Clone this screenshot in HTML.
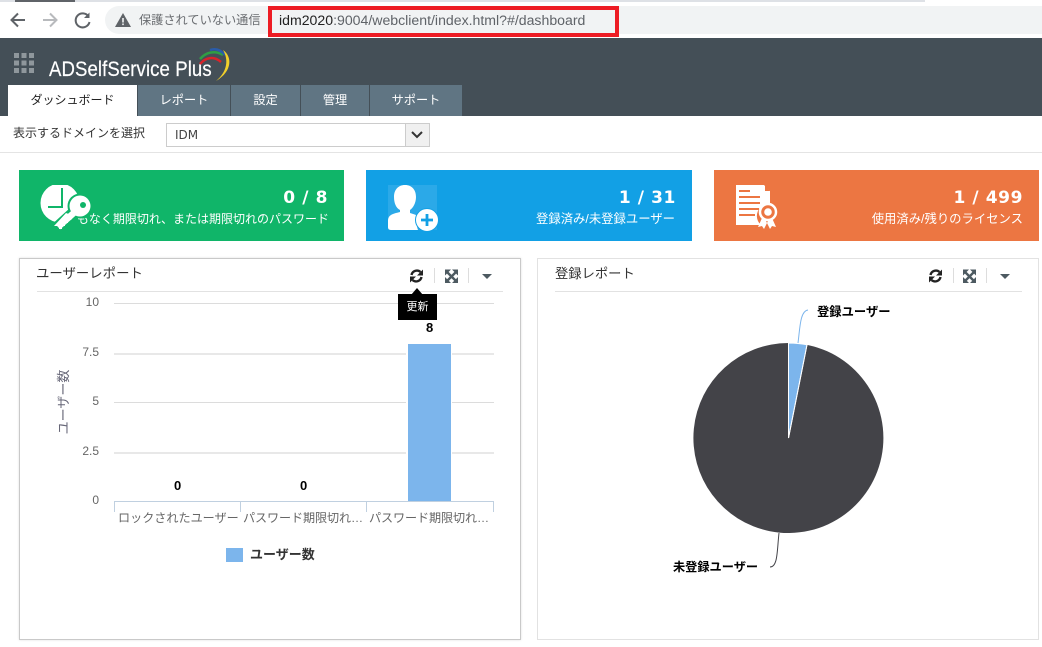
<!DOCTYPE html>
<html lang="ja"><head><meta charset="utf-8">
<style>
html,body{margin:0;padding:0;background:#fff}
body{width:1042px;height:647px;position:relative;overflow:hidden;font-family:"Liberation Sans","Noto Sans CJK JP",sans-serif;color:#333}
.a{position:absolute}
.t{position:absolute;white-space:nowrap;line-height:16px}
.tab{position:absolute;top:85px;height:31px;background:#607583;color:#fff;font-size:12.2px;line-height:30px;text-align:center}
.card{position:absolute;top:170px;height:71px;color:#fff}
.num{position:absolute;top:17px;font-size:17px;font-weight:bold;line-height:22px;letter-spacing:.6px;white-space:nowrap;font-family:"DejaVu Sans","Liberation Sans",sans-serif}
.sub{position:absolute;top:41px;font-size:12.35px;line-height:16px;white-space:nowrap}
.panel{position:absolute;top:258px;height:380px;background:#fff}
.grid{position:absolute;left:114px;width:380px;height:1px;background:#dcdcdc}
.yl{position:absolute;left:70px;width:29px;text-align:right;font-size:12px;line-height:14px;color:#666}
.xl{position:absolute;top:510px;font-size:12.1px;line-height:16px;color:#666;white-space:nowrap}
.dl{position:absolute;font-size:13px;font-weight:bold;color:#000;line-height:14px}
</style></head><body>

<!-- browser chrome -->
<div class="a" style="left:0;top:0;width:925px;height:2px;background:#dee1e6"></div>
<div class="a" style="left:15px;top:0;width:60px;height:2px;background:#5f6368"></div>
<svg class="a" style="left:8px;top:9px" width="85" height="22" viewBox="0 0 85 22" fill="none" stroke-width="2">
<path d="M17 11H4M10 4.500L3.500 11l6.500 6.500" stroke="#5f6368"/>
<path d="M35 11h13M42 4.500l6.500 6.500-6.500 6.500" stroke="#b8babd"/>
<path d="M80.500 7.500A7 7 0 1 0 81.500 13" stroke="#5f6368"/><path d="M81.500 3.500v5.500h-5.500z" fill="#5f6368" stroke="none"/>
</svg>
<div class="a" style="left:105px;top:6px;width:960px;height:28px;border-radius:14px;background:#f1f3f4"></div>
<svg class="a" style="left:115px;top:13px" width="16" height="14" viewBox="0 0 16 14"><path d="M8 0L16 14H0z" fill="#5f6368"/><rect x="7.200" y="5" width="1.600" height="4.500" fill="#f1f3f4"/><rect x="7.200" y="10.500" width="1.600" height="1.600" fill="#f1f3f4"/></svg>
<div class="t" style="left:139px;top:12px;font-size:12.200px;color:#6a6d71">保護されていない通信</div>
<div class="a" style="left:268px;top:6px;width:343px;height:23px;border:4px solid #ed1c24"></div>
<div class="t" style="left:279px;top:12px;font-size:14.100px;color:#5f6368"><span style="color:#222">idm2020</span>:9004/webclient/index.html?#/dashboard</div>

<!-- header -->
<div class="a" style="left:0;top:38px;width:1042px;height:78px;background:#444f57"></div>
<svg class="a" style="left:14px;top:53px" width="20" height="20" fill="#8f979c"><rect width="5" height="5"/><rect x="7.500" width="5" height="5"/><rect x="15" width="5" height="5"/><rect y="7.500" width="5" height="5"/><rect x="7.500" y="7.500" width="5" height="5"/><rect x="15" y="7.500" width="5" height="5"/><rect y="15" width="5" height="5"/><rect x="7.500" y="15" width="5" height="5"/><rect x="15" y="15" width="5" height="5"/></svg>
<div class="t" style="left:49px;top:58px;font-size:21px;line-height:24px;color:#fff;transform:scaleX(.885);transform-origin:0 0;letter-spacing:.1px;-webkit-text-stroke:.2px #fff">ADSelfService Plus</div>
<svg class="a" style="left:192px;top:45px" width="42" height="38" viewBox="0 0 42 38" fill="none">
<path d="M8 14C14 7 23 5 31 10" stroke="#2f9e44" stroke-width="2.500"/>
<path d="M8 19C14 12 22 11 29 17" stroke="#d8232a" stroke-width="2.500"/>
<path d="M18 5C24 3 29 5 33 10" stroke="#2a5caa" stroke-width="2.500"/>
<path d="M31 5C40 11 41 26 24 36C35 27 37 15 31 5z" fill="#f1cf2b"/>
</svg>
<div class="tab" style="left:8px;width:129px;background:#fff;color:#222;font-size:12px">ダッシュボード</div>
<div class="tab" style="left:138px;width:92px">レポート</div>
<div class="tab" style="left:231px;width:69px">設定</div>
<div class="tab" style="left:301px;width:68px">管理</div>
<div class="tab" style="left:370px;width:92px">サポート</div>

<!-- domain row -->
<div class="t" style="left:13px;top:125px;font-size:12px;color:#333">表示するドメインを選択</div>
<div class="a" style="left:166px;top:123px;width:262px;height:22px;border:1px solid #ccc;background:#fff"></div>
<div class="t" style="left:175px;top:127px;font-size:12px;color:#444;font-family:'DejaVu Sans',sans-serif">IDM</div>
<div class="a" style="left:405px;top:123px;width:23px;height:22px;border:1px solid #ccc;background:#f0f0f0"></div>
<svg class="a" style="left:411px;top:131px" width="12" height="8" fill="none"><path d="M1 1l5 5 5-5" stroke="#333" stroke-width="2"/></svg>
<div class="a" style="left:0;top:152px;width:1042px;height:1px;background:#e4e4e4"></div>

<!-- cards -->
<div class="card" style="left:19px;width:325px;background:#10b569">
<div class="num" style="right:16px">0 / 8</div>
<div class="sub" style="right:15px;width:252px;overflow:hidden;direction:rtl;font-size:12px">まもなく期限切れ、または期限切れのパスワード</div>
<svg class="a" style="left:21px;top:15px" width="56" height="48" viewBox="0 0 56 48">
<circle cx="20" cy="18" r="19.500" fill="#fff"/>
<path d="M22 3v19H8" fill="none" stroke="#10b569" stroke-width="2"/>
<path d="M36 25L15 44" stroke="#10b569" stroke-width="11"/>
<circle cx="40" cy="21" r="12.500" fill="#10b569"/>
<path d="M36 26L18 42" stroke="#fff" stroke-width="6.500"/>
<path d="M14 41h5v3h3v-3h3v-3h3v-3h3l3-4-8-3z" fill="#fff"/>
<circle cx="40" cy="21" r="10.500" fill="#fff"/>
<circle cx="43" cy="20" r="3" fill="#10b569"/>
</svg>
</div>
<div class="card" style="left:366px;width:326px;background:#12a0e5">
<div class="a" style="left:22px;top:15px;width:49px;height:45px;background:#2ba9e8"></div>
<svg class="a" style="left:22px;top:15px" width="50" height="46" viewBox="0 0 50 46">
<path d="M17 0c7 0 11 5 11 12 0 6-3 11-6 13v3c3 1 7 2 10 4-3 3-4 8-2 13H4c-3 0-4-1-4-3v-6c0-6 4-7 12-9v-2C8 23 6 18 6 12 6 5 10 0 17 0z" fill="#fff"/>
<circle cx="39" cy="35" r="11.500" fill="#fff" stroke="#12a0e5" stroke-width="1"/>
<path d="M39 29v12M33 35h12" stroke="#12a0e5" stroke-width="2.800"/>
</svg>
<div class="num" style="right:16px">1 / 31</div>
<div class="sub" style="right:17px">登録済み/未登録ユーザー</div>
</div>
<div class="card" style="left:714px;width:325px;background:#ec7642">
<svg class="a" style="left:22px;top:14px" width="46" height="46" viewBox="0 0 46 46">
<path d="M0 1h28l6 6v13a12 12 0 0 0-9 21H0z" fill="#fff"/>
<path d="M29 1l5 6h-5z" fill="#ec7642"/>
<path d="M3 7h11M3 13h21M3 19h21M3 25h20M3 31h16" stroke="#ec7642" stroke-width="2"/>
<path d="M26 34l-4 9 4-1 2 3 4-8zM36 34l4 9-4-1-2 3-4-8z" fill="#fff"/>
<circle cx="32" cy="28" r="8" fill="none" stroke="#fff" stroke-width="2.500"/>
<circle cx="32" cy="28" r="3.800" fill="#fff"/>
</svg>
<div class="num" style="right:16px">1 / 499</div>
<div class="sub" style="right:16px">使用済み/残りのライセンス</div>
</div>

<!-- left panel -->
<div class="panel" style="left:19px;width:500px;border:1px solid #c9c9c9;box-shadow:0 0 2px #ddd"></div>
<div class="t" style="left:36px;top:266px;font-size:13.400px;color:#333">ユーザーレポート</div>
<div class="a" style="left:37px;top:291px;width:466px;height:1px;background:#e2e2e2"></div>
<svg class="a" style="left:409px;top:268px" width="88" height="16" viewBox="0 0 88 16" fill="none">
<path d="M2.500 7a5.500 5.500 0 0 1 9-3M12.500 9a5.500 5.500 0 0 1-9 3" stroke="#222" stroke-width="2.400"/><path d="M14 1.500v6H8zM1 14.500v-6h6z" fill="#222"/>
<path d="M25.500 0v15M59.500 0v15" stroke="#ddd"/>
<path d="M38 4l9 9M47 4l-9 9" stroke="#4d5a61" stroke-width="2.400"/>
<path d="M36 1.500h6l-6 6zM49 1.500h-6l6 6zM36 15h6l-6-6zM49 15h-6l6-6z" fill="#4d5a61"/>
<path d="M73 6h10l-5 5z" fill="#4d5a61"/>
</svg>

<div class="grid" style="top:303px"></div>
<div class="grid" style="top:353px;background:#e8e8e8;height:1.500px"></div>
<div class="grid" style="top:402px"></div>
<div class="grid" style="top:452px;background:#e8e8e8;height:1.500px"></div>
<div class="yl" style="top:295px">10</div>
<div class="yl" style="top:345px">7.5</div>
<div class="yl" style="top:394px">5</div>
<div class="yl" style="top:444px">2.5</div>
<div class="yl" style="top:493px">0</div>
<div class="t" style="left:64px;top:402px;font-size:13px;line-height:14px;color:#667;transform:translate(-50%,-50%) rotate(-90deg)">ユーザー数</div>

<div class="a" style="left:406px;top:343px;width:46px;height:159px;background:#fff"></div>
<div class="a" style="left:408px;top:344px;width:43px;height:157px;background:#7cb5ec"></div>
<div class="a" style="left:114px;top:501px;width:380px;height:1px;background:#c0d0e0"></div>
<div class="a" style="left:114px;top:501px;width:1px;height:11px;background:#c0d0e0"></div>
<div class="a" style="left:240px;top:501px;width:1px;height:11px;background:#c0d0e0"></div>
<div class="a" style="left:366px;top:501px;width:1px;height:11px;background:#c0d0e0"></div>
<div class="a" style="left:493px;top:501px;width:1px;height:11px;background:#c0d0e0"></div>
<div class="dl" style="left:174px;top:479px">0</div>
<div class="dl" style="left:300px;top:479px">0</div>
<div class="dl" style="left:426px;top:321px">8</div>
<div class="xl" style="left:118px">ロックされたユーザー</div>
<div class="xl" style="left:243px;letter-spacing:-.1px">パスワード期限切れ…</div>
<div class="xl" style="left:369px;letter-spacing:-.1px">パスワード期限切れ…</div>
<div class="a" style="left:226px;top:548px;width:17px;height:14px;background:#7cb5ec"></div>
<div class="t" style="left:250px;top:547px;font-size:13px;font-weight:bold;color:#333">ユーザー数</div>

<!-- tooltip -->
<svg class="a" style="left:410px;top:288px" width="14" height="7"><path d="M7 0l6 7H1z" fill="#000"/></svg>
<div class="a" style="left:398px;top:294px;width:39px;height:26px;background:#000;color:#fff;font-size:11px;line-height:26px;text-align:center">更新</div>

<!-- right panel -->
<div class="panel" style="left:537px;width:500px;border:1px solid #e2e2e2"></div>
<div class="t" style="left:555px;top:266px;font-size:13.300px;color:#333">登録レポート</div>
<div class="a" style="left:555px;top:291px;width:467px;height:1px;background:#e2e2e2"></div>
<svg class="a" style="left:928px;top:268px" width="88" height="16" viewBox="0 0 88 16" fill="none">
<path d="M2.500 7a5.500 5.500 0 0 1 9-3M12.500 9a5.500 5.500 0 0 1-9 3" stroke="#222" stroke-width="2.400"/><path d="M14 1.500v6H8zM1 14.500v-6h6z" fill="#222"/>
<path d="M25.500 0v15M58.500 0v15" stroke="#ddd"/>
<path d="M37 4l9 9M46 4l-9 9" stroke="#4d5a61" stroke-width="2.400"/>
<path d="M35 1.500h6l-6 6zM48 1.500h-6l6 6zM35 15h6l-6-6zM48 15h-6l6-6z" fill="#4d5a61"/>
<path d="M72 6h10l-5 5z" fill="#4d5a61"/>
</svg>

<svg class="a" style="left:680px;top:300px" width="220" height="280" viewBox="680 300 220 280" fill="none">
<path d="M788.500 438L788.500 343A95 95 0 1 1 770 531.200 95 95 0 0 1 788.500 343z" fill="#434348"/>
<path d="M788.500 438V343A95 95 0 0 1 807 344.800z" fill="#7cb5ec" stroke="#fff" stroke-width="1"/>
<path d="M788.500 438V343" stroke="#fff" stroke-width="1"/>
<path d="M788.500 438L807 344.800" stroke="#fff" stroke-width="1"/>
<path d="M798 343C800 328 800 311 808 310" stroke="#7cb5ec" stroke-width="1"/>
<path d="M779 533C777 550 778 567 770 567" stroke="#434348" stroke-width="1"/>
</svg>
<div class="t" style="left:817px;top:304px;font-size:12.300px;font-weight:bold;color:#000">登録ユーザー</div>
<div class="t" style="left:673px;top:559px;font-size:12.200px;font-weight:bold;color:#000">未登録ユーザー</div>
</body></html>
